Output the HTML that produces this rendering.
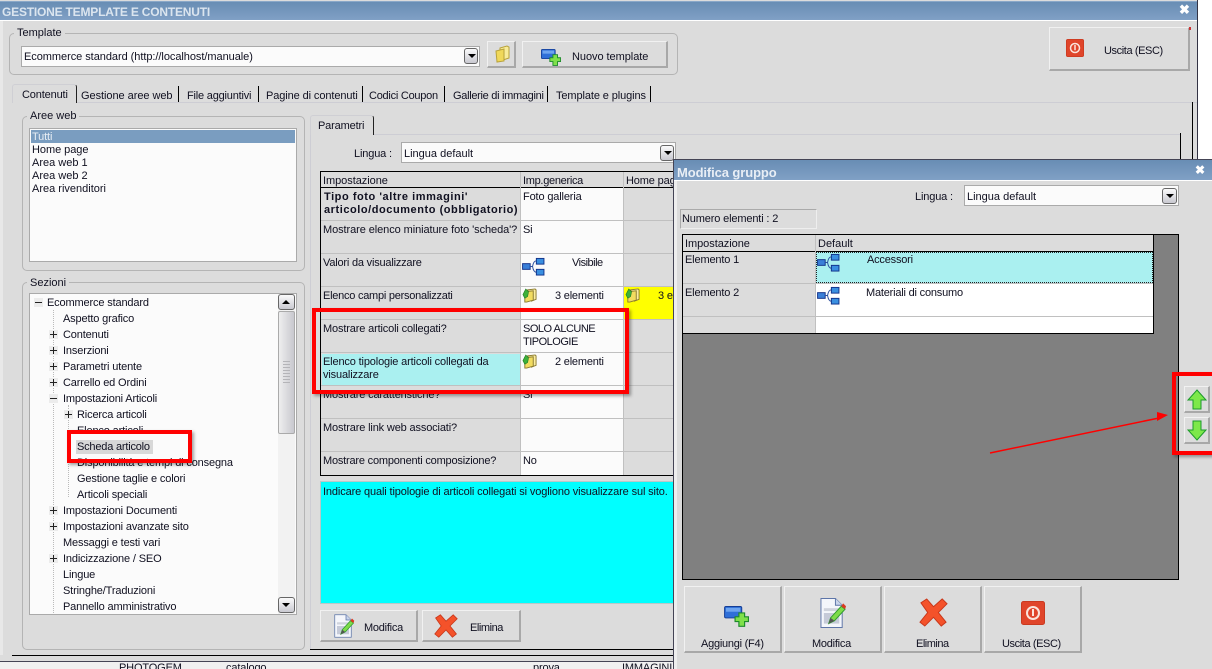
<!DOCTYPE html>
<html lang="it"><head><meta charset="utf-8"><title>Gestione template e contenuti</title>
<style>
html,body{margin:0;padding:0;background:#fff}
#p{position:relative;width:1212px;height:669px;overflow:hidden;background:#fff;font:11px/13px "Liberation Sans",sans-serif;color:#101020}
#p div,#p span.t,#p svg.a{position:absolute;box-sizing:border-box}
.t{white-space:nowrap;margin-top:1px;letter-spacing:-.15px}
.tb{background:linear-gradient(#688db4,#80a0c5)}
.g{border:1px solid #b4b4b4;border-radius:5px}
.lg{background:#dcdcdc;padding:0 3px;height:13px;letter-spacing:0}
.b{background:#dcdcdc;border:1px solid #bcbcbc;border-top-color:#f1f1f1;border-left-color:#f1f1f1;border-right:2px solid #a8a8a8;border-bottom:2px solid #a8a8a8}
.cb{background:#fbfbfb;border:1px solid #aaa}
.ab{background:linear-gradient(#fafafa,#c9c9d0);border:1px solid #666;border-radius:3px}
.ab:after{content:"";position:absolute;left:3px;top:5px;border:4px solid transparent;border-top:4px solid #000;border-bottom:0}
.abu:after{border-top:0;border-bottom:4px solid #000}
.gl{background:#c0c0c0}
.k{background:#000}
.r{border:4px solid #f00;box-shadow:2px 2px 3px rgba(0,0,0,.35)}
.pl,.mi{width:9px;height:9px;background:#f4f4f4}
.mi{background:linear-gradient(#222,#222) center/7px 1px no-repeat,#ececec}
.pl{background:linear-gradient(#222,#222) center/7px 1px no-repeat,linear-gradient(#222,#222) center/1px 7px no-repeat,#ececec}
.dv{width:0;border-left:1px dotted #bbb}
</style></head><body>
<svg width="0" height="0" style="position:absolute">
<defs>
<symbol id="tree" viewBox="0 0 24 20"><path d="M9 10h2M15 4Q12 4 11 10Q12 16 15 16" stroke="#2b4f9e" fill="none"/><rect x=".5" y="7" width="8" height="6" fill="#3a7fd8" stroke="#12328a"/><rect x="15" y="1.500" width="8" height="6" fill="#3a8fe0" stroke="#12328a"/><rect x="15" y="13" width="8" height="6" fill="#3a8fe0" stroke="#12328a"/></symbol>
<symbol id="fold" viewBox="0 0 16 16"><path d="M6 2l8-1 1 1v10l-5 2z" fill="#fbeea0" stroke="#8a7a2f"/><path d="M3 4l9-1v10l-7 2H3z" fill="#f2dc60" stroke="#8a7a2f"/><path d="M1 7l3-6 3 3-1 5-3 2z" fill="#3db03a" stroke="#1c7a20" stroke-width=".6"/></symbol>
<symbol id="folder" viewBox="0 0 16 18"><path d="M6 3l7-2 2 1v11l-9 3z" fill="#f8ec9a" stroke="#b8a23a"/><path d="M2 6l8-2v12l-7 1z" fill="#f0d85a" stroke="#b8a23a"/></symbol>
<symbol id="add" viewBox="0 0 26 22"><rect x=".5" y=".5" width="18" height="12" rx="1.500" fill="#2f6fd8" stroke="#153d94"/><rect x="2" y="2" width="15" height="4" fill="#6ea4ee"/><path d="M15 7h6v4h4v5h-4v5h-6v-5h-4v-5h4z" fill="#7fe04a" stroke="#1d8a2c" stroke-width="1.200" transform="translate(.5 .3)"/></symbol>
<symbol id="mod" viewBox="0 0 28 32"><path d="M1 1h15l7 7v23H1z" fill="#f4f6fb" stroke="#5d75a8"/><path d="M16 1v7h7" fill="#c9d4ea" stroke="#5d75a8"/><rect x="4" y="11" width="16" height="3" fill="#cfd3dc"/><rect x="4" y="16" width="16" height="11" fill="#c5cad8"/><path d="M9 27l2-6L22 9l4 3-11 12z" fill="#7edc4a" stroke="#2f9a2c"/><path d="M22 9l2-3 3 3-1 3z" fill="#d93a20"/><path d="M9 27l2-6 4 3z" fill="#555"/></symbol>
<symbol id="x" viewBox="0 0 30 30"><path d="M2 5L8 1l7 8 9-8 5 5-9 9 8 10-5 4-8-9-9 9-5-4 8-10z" fill="#f4522a" stroke="#c8371a"/></symbol>
<symbol id="ex" viewBox="0 0 24 24"><rect x=".5" y=".5" width="23" height="23" rx="2" fill="#e0452a" stroke="#c93a20"/><circle cx="12" cy="12" r="6" fill="none" stroke="#fbe3da" stroke-width="2"/><path d="M12 8v7" stroke="#fbe3da" stroke-width="2"/></symbol>
</defs></svg>
<div id="p">
<!-- main window -->
<div style="left:0;top:0;width:1198px;height:669px;background:#dcdcdc;border-right:1px solid #334"></div>
<div class="tb" style="left:0;top:1px;width:1197px;height:19px;border-top:1px solid #8aa8c8"></div>
<div style="left:0;top:20px;width:1197px;height:1px;background:#fff"></div>
<span class="t" style="left:2px;top:5px;font-size:12px;font-weight:bold;color:#dbe5ef;letter-spacing:-.2px">GESTIONE TEMPLATE E CONTENUTI</span>
<span class="t" style="left:1179px;top:2px;font-size:13px;font-weight:bold;color:#fff">✖</span>
<div style="left:0;top:21px;width:3px;height:634px;background:#e8e8e8"></div>

<!-- template group -->
<div class="g" style="left:9px;top:33px;width:669px;height:42px"></div>
<span class="t lg" style="left:14px;top:26px">Template</span>
<div class="cb" style="left:21px;top:46px;width:459px;height:21px"></div>
<span class="t" style="left:24px;top:50px;letter-spacing:-.05px">Ecommerce standard (http://localhost/manuale)</span>
<div class="ab" style="left:464px;top:48px;width:14px;height:16px"></div>
<div class="b" style="left:487px;top:41px;width:29px;height:27px"></div>
<svg class="a" style="left:494px;top:45px" width="16" height="18"><use href="#folder"/></svg>
<div class="b" style="left:522px;top:41px;width:146px;height:27px"></div>
<svg class="a" style="left:541px;top:49px" width="20" height="17"><use href="#add"/></svg>
<span class="t" style="left:572px;top:50px;letter-spacing:-.05px">Nuovo template</span>

<!-- uscita -->
<div class="b" style="left:1049px;top:27px;width:141px;height:44px"></div>
<svg class="a" style="left:1066px;top:39px" width="18" height="18"><use href="#ex"/></svg>
<span class="t" style="left:1104px;top:44px;letter-spacing:-.4px">Uscita (ESC)</span>
<div style="left:1189px;top:27px;width:2px;height:3px;background:#c33"></div>

<!-- tabs -->
<div style="left:12px;top:102px;width:1185px;height:1px;background:#cdcdd4"></div>
<div style="left:12px;top:84px;width:65px;height:19px;background:#dcdcdc;border:1px solid #cfcfd4;border-bottom:0;border-right:1px solid #222;border-radius:3px 3px 0 0"></div>
<span class="t" style="left:22px;top:88px">Contenuti</span>
<span class="t" style="left:81px;top:89px;letter-spacing:-.05px">Gestione aree web</span>
<span class="t" style="left:187px;top:89px;letter-spacing:-.2px">File aggiuntivi</span>
<span class="t" style="left:266px;top:89px;letter-spacing:-.1px">Pagine di contenuti</span>
<span class="t" style="left:369px;top:89px;letter-spacing:-.25px">Codici Coupon</span>
<span class="t" style="left:453px;top:89px;letter-spacing:-.3px">Gallerie di immagini</span>
<span class="t" style="left:556px;top:89px;letter-spacing:-.1px">Template e plugins</span>
<div class="k" style="left:178px;top:86px;width:1px;height:16px"></div>
<div class="k" style="left:258px;top:86px;width:1px;height:16px"></div>
<div class="k" style="left:362px;top:86px;width:1px;height:16px"></div>
<div class="k" style="left:444px;top:86px;width:1px;height:16px"></div>
<div class="k" style="left:547px;top:86px;width:1px;height:16px"></div>
<div class="k" style="left:650px;top:86px;width:1px;height:16px"></div>
<div class="k" style="left:1192px;top:102px;width:1px;height:60px"></div>
<div class="k" style="left:1180px;top:133px;width:1px;height:28px"></div>

<!-- Aree web -->
<div class="g" style="left:22px;top:116px;width:283px;height:155px"></div>
<span class="t lg" style="left:27px;top:109px">Aree web</span>
<div class="cb" style="left:29px;top:128px;width:268px;height:134px"></div>
<div style="left:31px;top:130px;width:264px;height:13px;background:#7a9dc0"></div>
<span class="t" style="left:32px;top:130px;color:#e8eef4">Tutti</span>
<span class="t" style="left:32px;top:143px;letter-spacing:-.05px">Home page</span>
<span class="t" style="left:32px;top:156px;letter-spacing:0">Area web 1</span>
<span class="t" style="left:32px;top:169px;letter-spacing:0">Area web 2</span>
<span class="t" style="left:32px;top:182px;letter-spacing:0">Area rivenditori</span>

<!-- Sezioni -->
<div class="g" style="left:22px;top:282px;width:283px;height:368px"></div>
<span class="t lg" style="left:27px;top:276px">Sezioni</span>
<div class="cb" style="left:29px;top:293px;width:268px;height:322px"></div>
<div class="dv" style="left:53px;top:310px;height:303px"></div>
<div class="dv" style="left:68px;top:405px;height:92px"></div>
<div style="left:278px;top:294px;width:17px;height:320px;background:#f2f2f2"></div>
<div class="ab abu" style="left:278px;top:294px;width:17px;height:16px"></div>
<div style="left:278px;top:311px;width:17px;height:123px;background:linear-gradient(90deg,#eee,#c8c8cf);border:1px solid #aaa;border-radius:2px"></div>
<div style="left:283px;top:361px;width:7px;height:22px;background:repeating-linear-gradient(#b4b4b8 0 1px,transparent 1px 3px)"></div>
<div class="ab" style="left:278px;top:597px;width:17px;height:16px"></div>
<div style="left:76px;top:440px;width:77px;height:14px;background:#d8d8d8"></div>
<span class="t" style="left:47px;top:296px">Ecommerce standard</span>
<span class="t" style="left:63px;top:312px">Aspetto grafico</span>
<span class="t" style="left:63px;top:328px">Contenuti</span>
<span class="t" style="left:63px;top:344px">Inserzioni</span>
<span class="t" style="left:63px;top:360px">Parametri utente</span>
<span class="t" style="left:63px;top:376px">Carrello ed Ordini</span>
<span class="t" style="left:63px;top:392px">Impostazioni Articoli</span>
<span class="t" style="left:77px;top:408px">Ricerca articoli</span>
<span class="t" style="left:77px;top:424px">Elenco articoli</span>
<span class="t" style="left:77px;top:440px;letter-spacing:-.2px">Scheda articolo</span>
<span class="t" style="left:77px;top:456px">Disponibilità e tempi di consegna</span>
<span class="t" style="left:77px;top:472px">Gestione taglie e colori</span>
<span class="t" style="left:77px;top:488px">Articoli speciali</span>
<span class="t" style="left:63px;top:504px">Impostazioni Documenti</span>
<span class="t" style="left:63px;top:520px">Impostazioni avanzate sito</span>
<span class="t" style="left:63px;top:536px">Messaggi e testi vari</span>
<span class="t" style="left:63px;top:552px">Indicizzazione / SEO</span>
<span class="t" style="left:63px;top:568px">Lingue</span>
<span class="t" style="left:63px;top:584px">Stringhe/Traduzioni</span>
<span class="t" style="left:63px;top:600px">Pannello amministrativo</span>
<div class="mi" style="left:34px;top:298px"></div>
<div class="pl" style="left:49px;top:330px"></div>
<div class="pl" style="left:49px;top:346px"></div>
<div class="pl" style="left:49px;top:362px"></div>
<div class="pl" style="left:49px;top:378px"></div>
<div class="mi" style="left:49px;top:394px"></div>
<div class="pl" style="left:64px;top:410px"></div>
<div class="pl" style="left:49px;top:506px"></div>
<div class="pl" style="left:49px;top:522px"></div>
<div class="pl" style="left:49px;top:554px"></div>

<!-- Parametri -->
<div style="left:310px;top:115px;width:64px;height:20px;background:#dcdcdc;border:1px solid #cfcfd4;border-bottom:0;border-right:1px solid #222;border-radius:3px 3px 0 0"></div>
<span class="t" style="left:318px;top:119px">Parametri</span>
<div style="left:374px;top:134px;width:806px;height:1px;background:#cdcdd4"></div>
<div style="left:310px;top:135px;width:1px;height:514px;background:#cdcdd4"></div>
<span class="t" style="left:354px;top:147px">Lingua :</span>
<div class="cb" style="left:401px;top:142px;width:275px;height:21px"></div>
<span class="t" style="left:404px;top:147px;letter-spacing:0">Lingua default</span>
<div class="ab" style="left:660px;top:145px;width:14px;height:16px"></div>

<!-- table -->
<div style="left:320px;top:171px;width:353px;height:305px;background:#dcdcdc;border:1px solid #000;border-right:0"></div>
<div style="left:521px;top:188px;width:102px;height:287px;background:#fbfbfb"></div>
<div style="left:321px;top:187px;width:352px;height:1px;background:#000"></div>
<div style="left:623px;top:287px;width:50px;height:32px;background:#ff0"></div>
<div style="left:322px;top:354px;width:198px;height:31px;background:#aaf0f0"></div>
<div class="gl" style="left:520px;top:172px;width:1px;height:303px"></div>
<div class="gl" style="left:623px;top:172px;width:1px;height:303px"></div>
<div class="gl" style="left:321px;top:220px;width:352px;height:1px"></div>
<div class="gl" style="left:321px;top:253px;width:352px;height:1px"></div>
<div class="gl" style="left:321px;top:286px;width:352px;height:1px"></div>
<div class="gl" style="left:321px;top:319px;width:352px;height:1px"></div>
<div class="gl" style="left:321px;top:352px;width:352px;height:1px"></div>
<div class="gl" style="left:321px;top:385px;width:352px;height:1px"></div>
<div class="gl" style="left:321px;top:418px;width:352px;height:1px"></div>
<div class="gl" style="left:321px;top:451px;width:352px;height:1px"></div>
<span class="t" style="left:323px;top:174px;letter-spacing:-.05px">Impostazione</span>
<span class="t" style="left:523px;top:174px;letter-spacing:-.3px">Imp.generica</span>
<span class="t" style="left:626px;top:174px">Home page</span>
<span class="t" style="left:324px;top:190px;font-weight:bold;letter-spacing:.55px">Tipo foto 'altre immagini'<br>articolo/documento (obbligatorio)</span>
<span class="t" style="left:523px;top:190px">Foto galleria</span>
<span class="t" style="left:323px;top:223px;letter-spacing:-.08px">Mostrare elenco miniature foto 'scheda'?</span>
<span class="t" style="left:523px;top:223px">Si</span>
<span class="t" style="left:323px;top:256px;letter-spacing:-.2px">Valori da visualizzare</span>
<svg class="a" style="left:522px;top:257px" width="23" height="19"><use href="#tree"/></svg>
<span class="t" style="left:572px;top:256px;letter-spacing:-.5px">Visibile</span>
<span class="t" style="left:323px;top:289px;letter-spacing:-.25px">Elenco campi personalizzati</span>
<svg class="a" style="left:522px;top:288px" width="15" height="15"><use href="#fold"/></svg>
<span class="t" style="left:555px;top:289px;letter-spacing:-.2px">3 elementi</span>
<svg class="a" style="left:625px;top:288px" width="15" height="15"><use href="#fold"/></svg>
<span class="t" style="left:658px;top:289px">3 e</span>
<span class="t" style="left:323px;top:322px">Mostrare articoli collegati?</span>
<span class="t" style="left:523px;top:322px;letter-spacing:-.5px">SOLO ALCUNE<br>TIPOLOGIE</span>
<span class="t" style="left:323px;top:355px">Elenco tipologie articoli collegati da<br>visualizzare</span>
<svg class="a" style="left:522px;top:354px" width="15" height="15"><use href="#fold"/></svg>
<span class="t" style="left:555px;top:355px;letter-spacing:-.2px">2 elementi</span>
<span class="t" style="left:323px;top:388px">Mostrare caratteristiche?</span>
<span class="t" style="left:523px;top:388px">Si</span>
<span class="t" style="left:323px;top:421px">Mostrare link web associati?</span>
<span class="t" style="left:323px;top:454px;letter-spacing:-.2px">Mostrare componenti composizione?</span>
<span class="t" style="left:523px;top:454px">No</span>

<!-- help -->
<div style="left:320px;top:481px;width:353px;height:123px;background:#0ff;border:1px solid #b8c8c8;border-right:0"></div>
<span class="t" style="left:323px;top:485px;letter-spacing:-.13px">Indicare quali tipologie di articoli collegati si vogliono visualizzare sul sito.</span>

<!-- buttons -->
<div class="b" style="left:320px;top:610px;width:98px;height:32px"></div>
<svg class="a" style="left:334px;top:613px" width="21" height="26"><use href="#mod"/></svg>
<span class="t" style="left:364px;top:621px;letter-spacing:-.25px">Modifica</span>
<div class="b" style="left:422px;top:610px;width:99px;height:32px"></div>
<svg class="a" style="left:434px;top:613px" width="24" height="26"><use href="#x"/></svg>
<span class="t" style="left:470px;top:621px;letter-spacing:-.45px">Elimina</span>

<div class="k" style="left:310px;top:649px;width:364px;height:1px"></div>
<div class="k" style="left:12px;top:655px;width:662px;height:1px"></div>
<div style="left:0;top:661px;width:1198px;height:8px;background:#f0f0f0;border-top:1px solid #445"></div>
<span class="t" style="left:119px;top:661px">PHOTOGEM</span>
<span class="t" style="left:226px;top:661px">catalogo</span>
<span class="t" style="left:533px;top:661px">prova</span>
<span class="t" style="left:622px;top:661px">IMMAGINI</span>

<!-- red boxes main -->
<div class="r" style="left:67px;top:430px;width:125px;height:33px"></div>
<div class="r" style="left:312px;top:308px;width:317px;height:86px"></div>

<!-- dialog -->
<div style="left:673px;top:159px;width:539px;height:510px;background:#dcdcdc;border-left:1px solid #445;border-top:1px solid #445"></div>
<div class="tb" style="left:674px;top:160px;width:538px;height:20px"></div>
<div style="left:674px;top:180px;width:538px;height:1px;background:#fff"></div>
<div style="left:674px;top:181px;width:3px;height:488px;background:#eee"></div>
<span class="t" style="left:677px;top:165px;font-size:13px;font-weight:bold;color:#e8eef5;letter-spacing:-.1px">Modifica gruppo</span>
<span class="t" style="left:1195px;top:163px;font-size:12px;font-weight:bold;color:#fff">✖</span>
<span class="t" style="left:915px;top:190px">Lingua :</span>
<div class="cb" style="left:964px;top:185px;width:215px;height:21px"></div>
<span class="t" style="left:967px;top:190px;letter-spacing:0">Lingua default</span>
<div class="ab" style="left:1162px;top:188px;width:15px;height:16px"></div>
<div style="left:680px;top:209px;width:137px;height:20px;border:1px solid #aaa;border-right-color:#eee;border-bottom-color:#eee"></div>
<span class="t" style="left:682px;top:212px">Numero elementi : 2</span>

<div style="left:682px;top:234px;width:497px;height:346px;background:#808080;border:1px solid #000"></div>
<div style="left:683px;top:235px;width:471px;height:99px;background:#dcdcdc;border-right:1px solid #000;border-bottom:1px solid #000"></div>
<div class="k" style="left:683px;top:251px;width:470px;height:1px"></div>
<div style="left:815px;top:284px;width:338px;height:49px;background:#fff"></div>
<div style="left:816px;top:252px;width:337px;height:31px;background:#aaf0f0;border:1px dotted #222"></div>
<div class="gl" style="left:815px;top:235px;width:1px;height:98px"></div>
<div class="gl" style="left:683px;top:283px;width:470px;height:1px"></div>
<div class="gl" style="left:683px;top:316px;width:470px;height:1px"></div>
<span class="t" style="left:685px;top:237px;letter-spacing:-.05px">Impostazione</span>
<span class="t" style="left:818px;top:237px;letter-spacing:0">Default</span>
<span class="t" style="left:685px;top:253px">Elemento 1</span>
<span class="t" style="left:685px;top:286px">Elemento 2</span>
<svg class="a" style="left:817px;top:253px" width="23" height="19"><use href="#tree"/></svg>
<svg class="a" style="left:817px;top:286px" width="23" height="19"><use href="#tree"/></svg>
<span class="t" style="left:867px;top:253px;letter-spacing:-.2px">Accessori</span>
<span class="t" style="left:866px;top:286px;letter-spacing:-.2px">Materiali di consumo</span>

<!-- dialog buttons -->
<div class="b" style="left:684px;top:586px;width:98px;height:67px"></div>
<div class="b" style="left:784px;top:586px;width:98px;height:67px"></div>
<div class="b" style="left:884px;top:586px;width:98px;height:67px"></div>
<div class="b" style="left:984px;top:586px;width:98px;height:67px"></div>
<svg class="a" style="left:724px;top:606px" width="25" height="21"><use href="#add"/></svg>
<svg class="a" style="left:820px;top:597px" width="27" height="32"><use href="#mod"/></svg>
<svg class="a" style="left:919px;top:598px" width="29" height="29"><use href="#x"/></svg>
<svg class="a" style="left:1021px;top:601px" width="24" height="24"><use href="#ex"/></svg>
<span class="t" style="left:701px;top:637px;letter-spacing:-.25px">Aggiungi (F4)</span>
<span class="t" style="left:812px;top:637px;letter-spacing:-.25px">Modifica</span>
<span class="t" style="left:916px;top:637px;letter-spacing:-.5px">Elimina</span>
<span class="t" style="left:1002px;top:637px;letter-spacing:-.4px">Uscita (ESC)</span>

<!-- arrows -->
<div class="b" style="left:1184px;top:386px;width:26px;height:27px"></div>
<div class="b" style="left:1184px;top:417px;width:26px;height:27px"></div>
<svg class="a" style="left:1187px;top:389px" width="20" height="21"><path d="M10 1L19 11H14V20H6V11H1z" fill="#7de84a" stroke="#1c9a2c"/></svg>
<svg class="a" style="left:1187px;top:420px" width="20" height="21"><path d="M10 20L19 10H14V1H6V10H1z" fill="#7de84a" stroke="#1c9a2c"/></svg>

<div class="r" style="left:1172px;top:372px;width:50px;height:83px"></div>
<svg class="a" style="left:985px;top:408px" width="190" height="50"><path d="M5 45L174 10" stroke="#f00" stroke-width="1.500" fill="none"/><path d="M183 7L172 4L172 13z" fill="#f00"/></svg>
</div>
</body></html>
